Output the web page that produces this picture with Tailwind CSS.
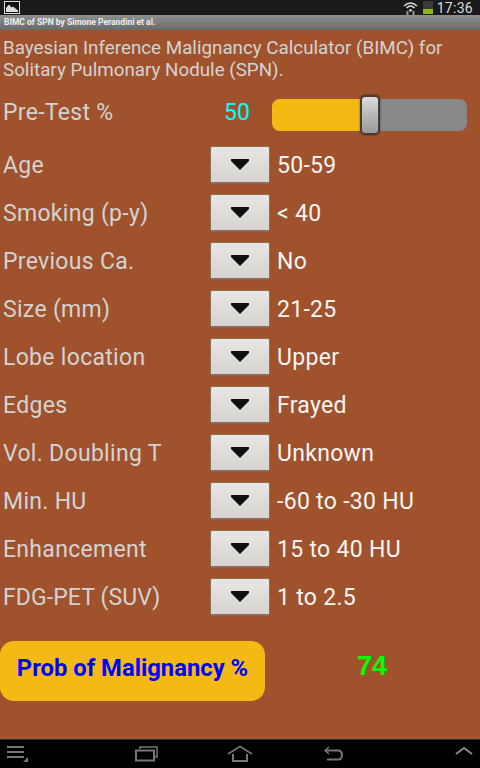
<!DOCTYPE html>
<html lang="en">
<head>
    <meta charset="UTF-8">
    <meta name="viewport" content="width=device-width, initial-scale=1.0">
    <title>BIMC of SPN</title>
    <script src="https://cdn.jsdelivr.net/npm/@tailwindcss/browser@4"></script>
</head>
<body class="w-[480px] h-[768px] overflow-hidden flex flex-col bg-[#a0522d] font-['Roboto',sans-serif]">
    <!-- Status bar -->
    <div class="h-[15px] bg-[#1a1a1a] flex items-center justify-between pl-[4px] pr-[7px] shrink-0">
        <svg width="16" height="13" viewBox="0 0 16 13">
            <rect x="0.5" y="0.5" width="15" height="12" fill="#111" stroke="#ddd"/>
            <path d="M2 11 L2 7 L5 3.5 L7.5 6.5 L9 5.5 L14 9.5 L14 11 Z" fill="#ddd"/>
        </svg>
        <div class="flex items-center">
            <svg width="15" height="14" viewBox="0 0 15 14" class="mr-[5px]">
                <path d="M1 5 Q7.5 -1 14 5" fill="none" stroke="#ddd" stroke-width="1.5"/>
                <path d="M3.5 7 Q7.5 3 11.5 7" fill="none" stroke="#ddd" stroke-width="1.5"/>
                <path d="M5.5 9 Q7.5 7.5 9.5 9 L7.5 11 Z" fill="#ddd"/>
                <path d="M4.5 10 v4 M10.5 10 v4" stroke="#999" stroke-width="2"/>
            </svg>
            <div class="w-[10px] h-[13px] bg-[#3a3a3a] flex flex-col justify-end mr-[4px]">
                <div class="h-[5px] bg-[#8fb31a]"></div>
            </div>
            <span class="text-[14px] leading-[14px] text-[#ddd] tracking-[0.3px]">17:36</span>
        </div>
    </div>

    <!-- Title bar -->
    <div class="h-[15px] bg-gradient-to-b from-[#8f8f8f] to-[#6a6a6a] pl-[4px] flex items-center shrink-0">
        <span class="text-[8.5px] font-bold text-[#eee] leading-none">BIMC of SPN by Simone Perandini et al.</span>
    </div>

    <!-- Content -->
    <div class="flex-1 flex flex-col">
        <p class="pl-[3px] pt-[7px] text-[18.8px] leading-[22px] text-[#d3d3d3] h-[59px]">Bayesian Inference Malignancy Calculator (BIMC) for Solitary Pulmonary Nodule (SPN).</p>

        <div class="flex items-center h-[46px] pl-[3px]">
            <span class="w-[221px] pt-[2px] text-[23px] tracking-[0.3px] text-[#d3d3d3]">Pre-Test %</span>
            <span class="w-[48px] pt-[2px] text-[23px] text-[#00ffff]">50</span>
            <div class="relative mt-[6px] w-[195px] h-[32px] rounded-[8px] bg-[#888888] overflow-visible">
                <div class="w-[90px] h-full rounded-l-[8px] bg-[#f5b914]"></div>
                <div class="absolute left-[88px] top-[-4px] w-[20px] h-[40px] rounded-[5px] border-2 border-[#4a3a30] bg-gradient-to-b from-[#dcdcdc] via-[#b8b8b8] to-[#9a9a9a] shadow-[0_0_2px_rgba(0,0,0,0.6)]"></div>
            </div>
        </div>

        <div class="flex flex-col pt-[11px] gap-[10px]">
            <div class="flex items-center h-[38px] pl-[3px]">
                <span class="w-[207px] pt-[2px] text-[23px] tracking-[0.3px] text-[#d3d3d3]">Age</span>
                <button class="w-[60px] h-[38px] flex items-center justify-center rounded-[2px] border border-b-2 border-[#8a6a58] bg-gradient-to-b from-[#e8e6e3] to-[#d6d3cf]"><svg width="18" height="11" viewBox="0 0 18 11"><path d="M0 0 H18 V2 L9 11 L0 2 Z" fill="#111"/></svg></button>
                <span class="pl-[7px] pt-[2px] text-[23px] tracking-[0.3px] text-[#f5f5f5]">50-59</span>
            </div>
            <div class="flex items-center h-[38px] pl-[3px]">
                <span class="w-[207px] pt-[2px] text-[23px] tracking-[0.3px] text-[#d3d3d3]">Smoking (p-y)</span>
                <button class="w-[60px] h-[38px] flex items-center justify-center rounded-[2px] border border-b-2 border-[#8a6a58] bg-gradient-to-b from-[#e8e6e3] to-[#d6d3cf]"><svg width="18" height="11" viewBox="0 0 18 11"><path d="M0 0 H18 V2 L9 11 L0 2 Z" fill="#111"/></svg></button>
                <span class="pl-[7px] pt-[2px] text-[23px] tracking-[0.3px] text-[#f5f5f5]">&lt; 40</span>
            </div>
            <div class="flex items-center h-[38px] pl-[3px]">
                <span class="w-[207px] pt-[2px] text-[23px] tracking-[0.3px] text-[#d3d3d3]">Previous Ca.</span>
                <button class="w-[60px] h-[38px] flex items-center justify-center rounded-[2px] border border-b-2 border-[#8a6a58] bg-gradient-to-b from-[#e8e6e3] to-[#d6d3cf]"><svg width="18" height="11" viewBox="0 0 18 11"><path d="M0 0 H18 V2 L9 11 L0 2 Z" fill="#111"/></svg></button>
                <span class="pl-[7px] pt-[2px] text-[23px] tracking-[0.3px] text-[#f5f5f5]">No</span>
            </div>
            <div class="flex items-center h-[38px] pl-[3px]">
                <span class="w-[207px] pt-[2px] text-[23px] tracking-[0.3px] text-[#d3d3d3]">Size (mm)</span>
                <button class="w-[60px] h-[38px] flex items-center justify-center rounded-[2px] border border-b-2 border-[#8a6a58] bg-gradient-to-b from-[#e8e6e3] to-[#d6d3cf]"><svg width="18" height="11" viewBox="0 0 18 11"><path d="M0 0 H18 V2 L9 11 L0 2 Z" fill="#111"/></svg></button>
                <span class="pl-[7px] pt-[2px] text-[23px] tracking-[0.3px] text-[#f5f5f5]">21-25</span>
            </div>
            <div class="flex items-center h-[38px] pl-[3px]">
                <span class="w-[207px] pt-[2px] text-[23px] tracking-[0.3px] text-[#d3d3d3]">Lobe location</span>
                <button class="w-[60px] h-[38px] flex items-center justify-center rounded-[2px] border border-b-2 border-[#8a6a58] bg-gradient-to-b from-[#e8e6e3] to-[#d6d3cf]"><svg width="18" height="11" viewBox="0 0 18 11"><path d="M0 0 H18 V2 L9 11 L0 2 Z" fill="#111"/></svg></button>
                <span class="pl-[7px] pt-[2px] text-[23px] tracking-[0.3px] text-[#f5f5f5]">Upper</span>
            </div>
            <div class="flex items-center h-[38px] pl-[3px]">
                <span class="w-[207px] pt-[2px] text-[23px] tracking-[0.3px] text-[#d3d3d3]">Edges</span>
                <button class="w-[60px] h-[38px] flex items-center justify-center rounded-[2px] border border-b-2 border-[#8a6a58] bg-gradient-to-b from-[#e8e6e3] to-[#d6d3cf]"><svg width="18" height="11" viewBox="0 0 18 11"><path d="M0 0 H18 V2 L9 11 L0 2 Z" fill="#111"/></svg></button>
                <span class="pl-[7px] pt-[2px] text-[23px] tracking-[0.3px] text-[#f5f5f5]">Frayed</span>
            </div>
            <div class="flex items-center h-[38px] pl-[3px]">
                <span class="w-[207px] pt-[2px] text-[23px] tracking-[0.3px] text-[#d3d3d3]">Vol. Doubling T</span>
                <button class="w-[60px] h-[38px] flex items-center justify-center rounded-[2px] border border-b-2 border-[#8a6a58] bg-gradient-to-b from-[#e8e6e3] to-[#d6d3cf]"><svg width="18" height="11" viewBox="0 0 18 11"><path d="M0 0 H18 V2 L9 11 L0 2 Z" fill="#111"/></svg></button>
                <span class="pl-[7px] pt-[2px] text-[23px] tracking-[0.3px] text-[#f5f5f5]">Unknown</span>
            </div>
            <div class="flex items-center h-[38px] pl-[3px]">
                <span class="w-[207px] pt-[2px] text-[23px] tracking-[0.3px] text-[#d3d3d3]">Min. HU</span>
                <button class="w-[60px] h-[38px] flex items-center justify-center rounded-[2px] border border-b-2 border-[#8a6a58] bg-gradient-to-b from-[#e8e6e3] to-[#d6d3cf]"><svg width="18" height="11" viewBox="0 0 18 11"><path d="M0 0 H18 V2 L9 11 L0 2 Z" fill="#111"/></svg></button>
                <span class="pl-[7px] pt-[2px] text-[23px] tracking-[0.3px] text-[#f5f5f5]">-60 to -30 HU</span>
            </div>
            <div class="flex items-center h-[38px] pl-[3px]">
                <span class="w-[207px] pt-[2px] text-[23px] tracking-[0.3px] text-[#d3d3d3]">Enhancement</span>
                <button class="w-[60px] h-[38px] flex items-center justify-center rounded-[2px] border border-b-2 border-[#8a6a58] bg-gradient-to-b from-[#e8e6e3] to-[#d6d3cf]"><svg width="18" height="11" viewBox="0 0 18 11"><path d="M0 0 H18 V2 L9 11 L0 2 Z" fill="#111"/></svg></button>
                <span class="pl-[7px] pt-[2px] text-[23px] tracking-[0.3px] text-[#f5f5f5]">15 to 40 HU</span>
            </div>
            <div class="flex items-center h-[38px] pl-[3px]">
                <span class="w-[207px] pt-[2px] text-[23px] tracking-[0.1px] text-[#d3d3d3]">FDG-PET (SUV)</span>
                <button class="w-[60px] h-[38px] flex items-center justify-center rounded-[2px] border border-b-2 border-[#8a6a58] bg-gradient-to-b from-[#e8e6e3] to-[#d6d3cf]"><svg width="18" height="11" viewBox="0 0 18 11"><path d="M0 0 H18 V2 L9 11 L0 2 Z" fill="#111"/></svg></button>
                <span class="pl-[7px] pt-[2px] text-[23px] tracking-[0.3px] text-[#f5f5f5]">1 to 2.5</span>
            </div>
        </div>

        <div class="flex items-start mt-[25px]">
            <button class="w-[265px] h-[60px] pb-[4px] rounded-[14px] bg-[#f5b914] text-[23.8px] font-bold text-[#0000ff]">Prob of Malignancy %</button>
            <span class="ml-[92px] mt-[7px] text-[27px] leading-[36px] font-bold text-[#00ff00] font-['Liberation_Sans',sans-serif]">74</span>
        </div>
    </div>

    <!-- Navigation bar -->
    <div class="h-[29px] bg-black border-t border-[#2a3a44] flex items-center shrink-0">
        <svg width="22" height="20" viewBox="0 0 22 20" class="ml-[7px]">
            <path d="M0 3 H17 M0 8 H17 M0 13 H17" stroke="#777" stroke-width="2"/>
            <path d="M21 13 V18 H16 Z" fill="#777"/>
        </svg>
        <svg width="24" height="16" viewBox="0 0 24 16" class="ml-[106px]">
            <path d="M5 3 V1 H22 V11 H19" fill="none" stroke="#777" stroke-width="1.5"/>
            <rect x="1" y="4.5" width="18" height="10" fill="none" stroke="#777" stroke-width="2"/>
        </svg>
        <svg width="26" height="18" viewBox="0 0 26 18" class="ml-[68px]">
            <path d="M1 9 L13 1.5 L25 9" fill="none" stroke="#777" stroke-width="1.5"/>
            <path d="M6 9 V16 H20 V9" fill="none" stroke="#777" stroke-width="2"/>
        </svg>
        <svg width="20" height="16" viewBox="0 0 20 16" class="ml-[71px]">
            <path d="M5 1 L1 4.5 L5 8" fill="none" stroke="#777" stroke-width="1.5"/>
            <path d="M1 4.5 H14 Q18 4.5 18 9 Q18 13.5 14 13.5 H3" fill="none" stroke="#777" stroke-width="2"/>
        </svg>
        <svg width="18" height="10" viewBox="0 0 18 10" class="ml-[111px] mb-[6px]">
            <path d="M1 8 L9 2 L17 8" fill="none" stroke="#888" stroke-width="2"/>
        </svg>
    </div>
</body>
</html>
